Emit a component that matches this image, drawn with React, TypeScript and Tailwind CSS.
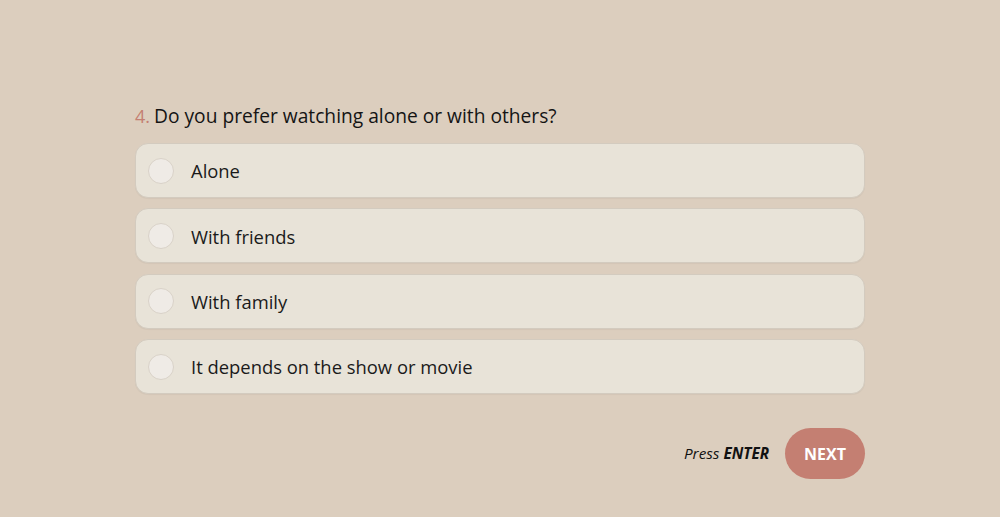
const options = ["Alone", "With friends", "With family", "It depends on the show or movie"];

export default function App() {
  return (
    <div
      className="min-h-[517px] w-full bg-[#dccebe] flex justify-center"
      style={{ fontFamily: '"Open Sans", sans-serif' }}
    >
      <div className="w-[730px] pt-[102px]">
        <div className="flex items-center text-[19.2px] leading-[28px] text-[#141414]">
          <span className="text-[#c47f72] text-[18px] mr-[4px]">4.</span>
          <span>Do you prefer watching alone or with others?</span>
        </div>
        <div className="mt-[13px] flex flex-col gap-[10.4px]">
          {options.map((o) => (
            <div
              key={o}
              className="h-[55px] rounded-[13px] bg-[#e8e3d8] border border-[#d3cbbf] shadow-[0_1px_1px_rgba(0,0,0,0.04)] flex items-center pl-[12px]"
            >
              <span className="w-[26px] h-[26px] rounded-full bg-[#efebe6] border border-[#d9d2c8] shrink-0" />
              <span className="ml-[17px] text-[18.4px] text-[#1a1a1a] pt-[1px]">{o}</span>
            </div>
          ))}
        </div>
        <div className="mt-[34px] flex items-center justify-end">
          <span className="italic text-[15.3px] text-[#111] mr-[16px]">
            Press <span className="font-bold">ENTER</span>
          </span>
          <button className="w-[80px] h-[51px] rounded-full bg-[#c47f72] text-white font-bold text-[16px]">
            NEXT
          </button>
        </div>
      </div>
    </div>
  );
}
